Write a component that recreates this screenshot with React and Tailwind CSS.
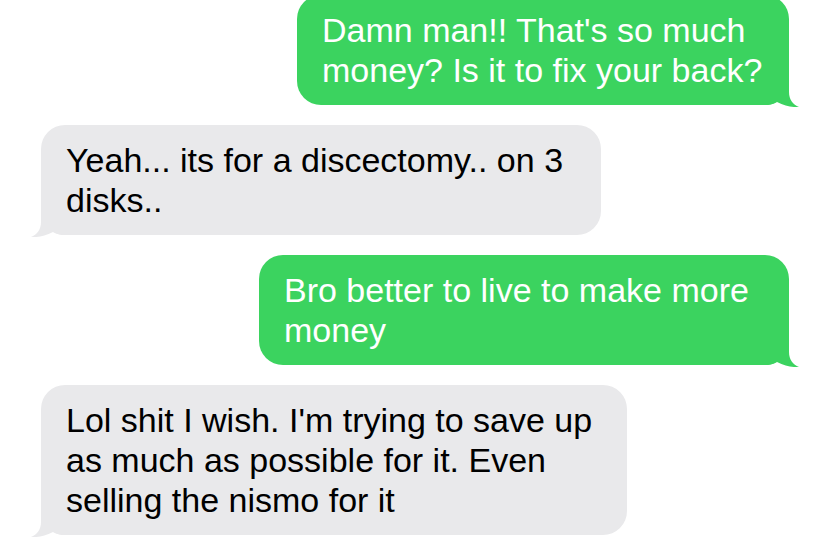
import React from "react";

const messages = [
  {
    from: "me",
    width: "w-[492px]",
    lines: ["Damn man!! That's so much", "money? Is it to fix your back?"],
  },
  {
    from: "them",
    width: "w-[560px]",
    lines: ["Yeah... its for a discectomy.. on 3", "disks.."],
  },
  {
    from: "me",
    width: "w-[530px]",
    lines: ["Bro better to live to make more", "money"],
  },
  {
    from: "them",
    width: "w-[586px]",
    lines: [
      "Lol shit I wish. I'm trying to save up",
      "as much as possible for it. Even",
      "selling the nismo for it",
    ],
  },
];

function Tail({ mine }) {
  // small curled tail at the bottom corner of the bubble
  return (
    <svg
      width="34"
      height="30"
      viewBox="0 0 34 30"
      className={`absolute bottom-[-2px] ${
        mine ? "right-[-10px]" : "left-[-10px] -scale-x-100"
      }`}
    >
      <path
        d="M0 0 H24 V15 C24 23 28 27.5 34 30 C27 30.5 20 29 12 25 C8 27.5 4 28 0 28 Z"
        fill={mine ? "#3bd35f" : "#e9e9eb"}
      />
    </svg>
  );
}

function Bubble({ from, width, lines }) {
  const mine = from === "me";
  return (
    <div
      className={`relative ${width} rounded-[24px] px-[25px] py-[15px] ${
        mine ? "self-end bg-[#3bd35f] text-white" : "self-start bg-[#e9e9eb] text-black"
      }`}
    >
      <Tail mine={mine} />
      <p className="relative text-[34px] leading-[40px] whitespace-nowrap">
        {lines.map((line, i) => (
          <span key={i} className="block">
            {line}
          </span>
        ))}
      </p>
    </div>
  );
}

export default function App() {
  return (
    <div
      className="w-[828px] h-[552px] overflow-hidden bg-white"
      style={{ fontFamily: '"Liberation Sans", Arial, sans-serif' }}
    >
      <div className="flex flex-col gap-[20px] pl-[41px] pr-[39px] -mt-[5px]">
        {messages.map((m, i) => (
          <Bubble key={i} {...m} />
        ))}
      </div>
    </div>
  );
}
